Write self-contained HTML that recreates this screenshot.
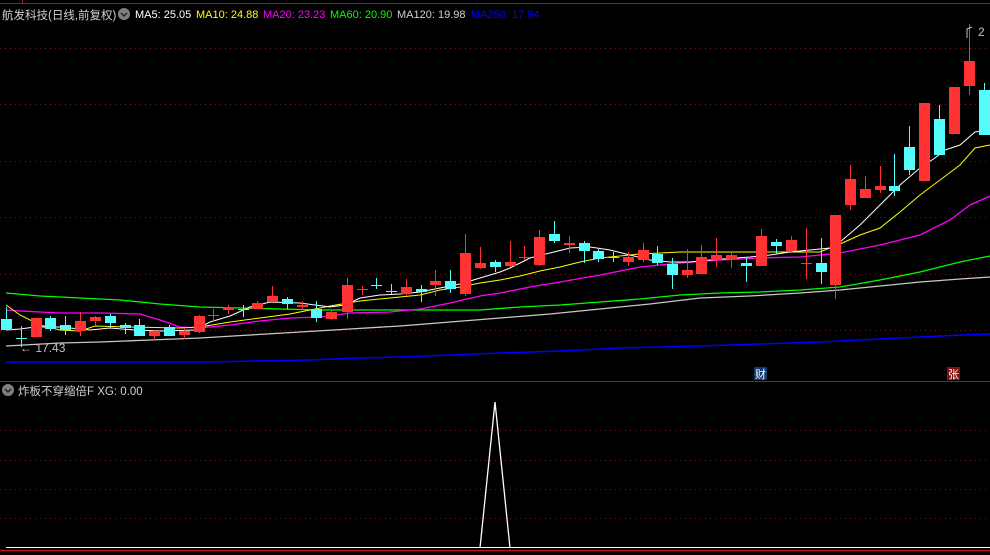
<!DOCTYPE html>
<html><head><meta charset="utf-8"><style>
html,body{margin:0;padding:0;background:#000;width:990px;height:555px;overflow:hidden}
svg{position:absolute;left:0;top:0}
text{font-family:"Liberation Sans","Noto Sans CJK SC",sans-serif}
</style></head><body>
<svg id="s" width="990" height="555" xmlns="http://www.w3.org/2000/svg">
<rect width="990" height="555" fill="#000"/>
<g stroke="#8b1010" stroke-width="1" stroke-dasharray="1,4">
<line x1="0" y1="48.5" x2="990" y2="48.5"/><line x1="0" y1="104.5" x2="990" y2="104.5"/>
<line x1="0" y1="161.5" x2="990" y2="161.5"/><line x1="0" y1="217.5" x2="990" y2="217.5"/>
<line x1="0" y1="274.5" x2="990" y2="274.5"/><line x1="0" y1="330.5" x2="990" y2="330.5"/>
<line x1="0" y1="430.5" x2="990" y2="430.5"/><line x1="0" y1="460.5" x2="990" y2="460.5"/>
<line x1="0" y1="489.5" x2="990" y2="489.5"/><line x1="0" y1="518.5" x2="990" y2="518.5"/>
</g>
<line x1="0" y1="3.5" x2="990" y2="3.5" stroke="#b01010"/>
<line x1="22.5" y1="0" x2="22.5" y2="3" stroke="#b01010"/>
<line x1="0" y1="381.5" x2="990" y2="381.5" stroke="#b01010"/>
<line x1="0" y1="550.5" x2="990" y2="550.5" stroke="#c01010" stroke-width="1.5"/>
<g fill="none" stroke-width="1">
<polyline stroke="#0000ff" stroke-width="1.5" points="6,362 100,362 200,362 310,360 360,358 400,357 450,355 500,353 560,351 620,348 700,346 760,344 820,342 880,339 940,336 990,334"/>
<polyline stroke="#c8c8c8" stroke-width="1.3" points="6,346 60,343 100,342 150,340 200,338 250,335 300,332 350,329 400,326 450,322 500,318 550,314 600,309 650,304 700,298 750,296 800,293 840,290 880,286 920,282 960,279 990,277"/>
<polyline stroke="#00ff00" stroke-width="1.3" points="6,293 40,296 80,298 120,300 160,304 200,307 240,308 280,309 320,310 360,310 440,310 480,310 520,307 560,305 600,302 640,299 680,295 720,293 760,292 800,290 840,287 880,280 920,272 960,262 990,256"/>
<polyline stroke="#ff00ff" stroke-width="1.3" points="6,310 20,311 60,313 100,313 140,314 160,320 180,327 200,328 230,325 260,321 290,318 320,317 350,313 390,312 420,309 450,303 480,296 500,293 530,287 560,282 600,275 640,267 680,263 720,260 760,258 800,257 840,253 880,245 920,235 950,220 970,205 990,196"/>
<polyline stroke="#ffff00" points="6,305 20,315 40,325 60,330 80,331 95,326 130,327 180,328 200,327 230,322 260,318 290,314 330,306 360,301 400,297 420,295 440,290 460,287 480,283 500,280 520,276 540,271 560,267 580,262 600,258 640,254 680,252 720,252 800,252 820,252 840,244 860,235 880,228 900,212 920,195 940,180 960,165 975,148 990,145"/>
<polyline stroke="#ffffff" points="6,330 20,329 35,327 60,327 90,330 110,328 135,330 160,331 195,330 210,322 230,316 250,307 270,302 300,303 330,307 345,305 360,298 380,295 400,294 420,292 440,288 460,284 480,278 500,272 510,268 530,258 550,253 570,248 590,247 610,250 630,255 650,260 670,262 690,262 710,260 750,257 770,255 790,252 810,250 830,248 840,242 860,225 880,205 900,185 920,168 935,158 945,150 960,145 975,132 990,130"/>
</g>
<g id="c"></g>
<text x="20" y="352" fill="#c0c0c0" font-size="12">← 17.43</text>
<polyline points="967,38 967,29 972,27" fill="none" stroke="#c0c0c0"/>
<text x="978" y="36" fill="#c0c0c0" font-size="12">2</text>
<rect x="754" y="367" width="13" height="13" fill="#123a70"/>
<text x="755" y="378" fill="#fff" font-size="11">财</text>
<rect x="947" y="367" width="13" height="13" fill="#801010"/>
<text x="948" y="378" fill="#fff" font-size="11">张</text>
<line x1="6" y1="547.5" x2="990" y2="547.5" stroke="#fff"/>
<polyline points="480,548 495,402 510,548" fill="none" stroke="#fff" stroke-width="1.3"/>
<circle cx="124" cy="14" r="6" fill="#808080"/>
<path d="M121,13 l3,3 l3,-3" stroke="#222" stroke-width="1.5" fill="none"/>
<text x="2" y="19" font-size="11.5" fill="#d0d0d0">航发科技(日线,前复权)</text>
<text y="18" font-size="11">
<tspan x="135" fill="#ffffff">MA5: 25.05</tspan>
<tspan x="196" fill="#ffff00">MA10: 24.88</tspan>
<tspan x="263" fill="#ff00ff">MA20: 23.23</tspan>
<tspan x="330" fill="#00ff00">MA60: 20.90</tspan>
<tspan x="397" fill="#d0d0d0">MA120: 19.98</tspan>
<tspan x="471" fill="#0000ff">MA250: 17.94</tspan>
</text>
<circle cx="8" cy="390" r="6" fill="#808080"/>
<path d="M5,389 l3,3 l3,-3" stroke="#222" stroke-width="1.5" fill="none"/>
<text x="18" y="395" font-size="11.5" fill="#d0d0d0">炸板不穿缩倍F  XG: 0.00</text>
</svg>
<script>
var d=[[6,'c',319,330,307,330],[21,'c',338,338,326,347],[36,'r',318,337,318,337],[50,'c',318,329,316,331],[65,'c',325,330,316,335],[80,'r',321,331,312,336],[95,'r',317,321,316,325],[110,'c',316,323,314,328],[125,'c',325,328,323,334],[139,'c',325,336,319,336],[154,'r',331,336,330,340],[169,'c',327,336,325,336],[184,'r',331,335,328,339],[199,'r',316,332,315,333],[213,'r',315,315,309,322],[228,'r',307,310,305,314],[243,'c',309,309,305,317],[257,'r',303,309,301,309],[272,'r',296,302,286,302],[287,'c',299,304,297,309],[302,'r',305,307,301,310],[316,'c',309,318,301,322],[331,'r',312,319,310,320],[347,'r',285,312,278,319],[362,'r',289,289,286,295],[376,'c',285,285,278,289],[391,'c',291,291,284,294],[406,'r',287,294,279,296],[421,'c',289,292,285,302],[435,'r',281,285,270,296],[450,'c',281,289,270,293],[465,'r',253,294,234,296],[480,'r',263,268,247,269],[495,'c',262,267,260,272],[510,'r',262,266,241,267],[524,'r',257,257,246,260],[539,'r',237,265,230,266],[554,'c',234,241,221,243],[569,'r',243,245,236,253],[584,'c',243,251,241,263],[598,'c',251,259,249,262],[613,'c',257,257,252,262],[628,'r',257,262,252,266],[643,'r',250,260,243,262],[657,'c',254,263,246,265],[672,'c',264,275,258,289],[687,'r',270,275,249,278],[701,'r',257,274,245,274],[716,'r',255,260,238,267],[731,'r',255,259,251,268],[746,'c',263,266,258,282],[761,'r',236,266,229,266],[776,'c',242,246,239,254],[791,'r',240,251,236,252],[806,'r',263,263,228,279],[821,'c',263,272,238,284],[835,'r',215,285,215,299],[850,'r',179,205,165,210],[865,'r',189,198,176,198],[880,'r',186,190,166,193],[894,'c',186,191,154,196],[909,'c',147,170,126,175],[924,'r',103,181,103,181],[939,'c',119,155,105,155],[954,'r',87,134,87,134],[969,'r',61,86,24,95],[984,'c',90,135,83,135]];
var g=document.getElementById('c'),h='';
d.forEach(function(a){var col=a[1]=='r'?'#ff3333':'#54fcfc';var x=a[0];
h+='<line x1="'+(x+.5)+'" y1="'+a[4]+'" x2="'+(x+.5)+'" y2="'+a[5]+'" stroke="'+col+'"/>';
var hh=a[3]-a[2];if(hh<1){h+='<line x1="'+(x-5)+'" y1="'+(a[2]+.5)+'" x2="'+(x+6)+'" y2="'+(a[2]+.5)+'" stroke="'+col+'"/>';}
else h+='<rect x="'+(x-5)+'" y="'+a[2]+'" width="11" height="'+hh+'" fill="'+col+'"/>';});
g.innerHTML=h;
</script>
</body></html>
